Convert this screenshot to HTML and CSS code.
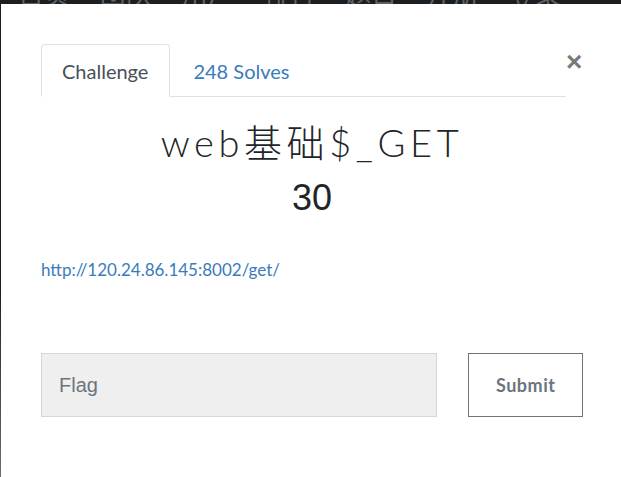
FILE: index.html
```html
<!DOCTYPE html>
<html lang="zh">
<head>
<meta charset="utf-8">
<title>Challenge</title>
<link rel="stylesheet" href="styles.css">
</head>
<body>
<div class="topbar"><span class="topbar-text">首页 团队 用户 排行 题目 注册 登录</span></div>
<div class="modal">
  <div class="modal-head">
    <ul class="nav-tabs">
      <li class="tab active">Challenge</li>
      <li class="tab link">248 Solves</li>
    </ul>
    <button class="close" aria-label="Close">&times;</button>
  </div>
  <h2 class="title">web基础$_GET</h2>
  <h3 class="value">30</h3>
  <p class="desc"><a href="#">http://120.24.86.145:8002/get/</a></p>
  <form class="flag-row">
    <input class="flag-input" type="text" placeholder="Flag">
    <button class="submit" type="button">Submit</button>
  </form>
</div>
</body>
</html>
```
FILE: styles.css
```css
html, body {
  margin: 0;
  padding: 0;
  height: 100%;
}
body {
  background: linear-gradient(#1c1f22 0, #1c1f22 60%, #6d6d6d 100%);
  overflow: hidden;
  font-family: Lato, "Noto Sans CJK SC", sans-serif;
}
.topbar {
  height: 4px;
  overflow: hidden;
  position: relative;
  background: #1c1f22;
}
.topbar-text {
  position: absolute;
  left: 18px;
  bottom: -2px;
  font-size: 26px;
  line-height: 26px;
  color: #5f6265;
  word-spacing: 24px;
  white-space: nowrap;
  font-family: "Noto Sans CJK SC", sans-serif;
}
.modal {
  margin-left: 1px;
  background: #fff;
  height: calc(100% - 4px);
  box-sizing: border-box;
  padding: 40px 38px 0 40px;
}
.modal-head {
  display: flex;
  align-items: flex-start;
  margin-right: 1px;
}
.nav-tabs {
  flex: 1;
  display: flex;
  list-style: none;
  margin: 0;
  padding: 0;
  border-bottom: 1px solid #dee2e6;
}
.tab {
  font-size: 20px;
  line-height: 24px;
  padding: 14px 21px 13px 20px;
  border: 1px solid transparent;
  border-top-left-radius: 4px;
  border-top-right-radius: 4px;
  margin-bottom: -1px;
}
.tab.active {
  color: #495057;
  border-color: #dee2e6 #dee2e6 #fff;
  background: #fff;
}
.tab.link {
  color: #3a7bbd;
  padding-left: 22px;
}
.close {
  background: none;
  border: 0;
  padding: 0;
  width: 16px;
  font-family: "Liberation Sans", sans-serif;
  font-size: 28px;
  line-height: 22px;
  font-weight: bold;
  color: #7a7a7a;
  margin-top: 7px;
}
.title {
  margin: 23px 0 0;
  text-align: center;
  font-family: Lato, "Noto Sans CJK SC", sans-serif;
  font-weight: 300;
  font-size: 38px;
  line-height: 44px;
  letter-spacing: 4.6px;
  color: #212529;
}
.value {
  margin: 14px 0 0;
  text-align: center;
  font-family: "Liberation Sans", sans-serif;
  font-weight: normal;
  font-size: 36px;
  line-height: 40px;
  color: #212529;
}
.desc {
  margin: 41px 0 0;
  font-size: 17px;
  line-height: 22px;
}
.desc a {
  color: #3a7bbd;
  text-decoration: none;
}
.flag-row {
  display: flex;
  margin-top: 72px;
  gap: 31px;
}
.flag-input {
  width: 398px;
  height: 64px;
  box-sizing: border-box;
  background: #efefef;
  border: 1px solid #d3d6da;
  padding: 0 17px;
  font-family: "Liberation Sans", sans-serif;
  font-size: 20px;
  color: #495057;
  outline: none;
}
.flag-input::placeholder {
  color: #6c757d;
}
.submit {
  width: 115px;
  height: 64px;
  box-sizing: border-box;
  background: #fff;
  border: 1px solid #6c757d;
  font-family: Lato, sans-serif;
  font-weight: bold;
  font-size: 18px;
  letter-spacing: 0.5px;
  color: #6c757d;
}
```
